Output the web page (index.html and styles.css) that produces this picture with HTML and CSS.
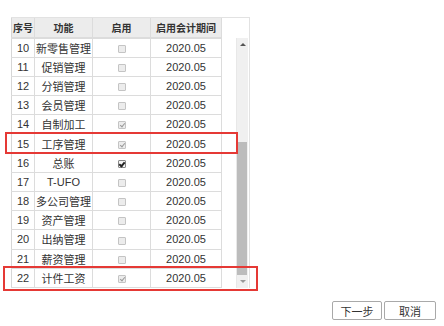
FILE: index.html
```html
<!DOCTYPE html>
<html lang="zh-CN">
<head>
    <meta charset="UTF-8">
    <title>启用模块</title>
    <link rel="stylesheet" href="styles.css">
</head>
<body>
    <div class="page">
        <div class="grid">
            <div class="grid_head">
                <table class="tbl">
                    <colgroup><col class="c1"><col class="c2"><col class="c3"><col class="c4"></colgroup>
                    <tr>
                        <th>序号</th>
                        <th>功能</th>
                        <th>启用</th>
                        <th>启用会计期间</th>
                    </tr>
                </table>
                <div class="head_fill"></div>
            </div>
            <div class="grid_body">
                <table class="tbl">
                    <colgroup><col class="c1"><col class="c2"><col class="c3"><col class="c4"></colgroup>
                    <tr><td>10</td><td>新零售管理</td><td><span class="cb"></span></td><td>2020.05</td></tr>
                    <tr><td>11</td><td>促销管理</td><td><span class="cb"></span></td><td>2020.05</td></tr>
                    <tr><td>12</td><td>分销管理</td><td><span class="cb"></span></td><td>2020.05</td></tr>
                    <tr><td>13</td><td>会员管理</td><td><span class="cb"></span></td><td>2020.05</td></tr>
                    <tr><td>14</td><td>自制加工</td><td><span class="cb dis_on"></span></td><td>2020.05</td></tr>
                    <tr><td>15</td><td>工序管理</td><td><span class="cb dis_on"></span></td><td>2020.05</td></tr>
                    <tr><td>16</td><td>总账</td><td><span class="cb on"></span></td><td>2020.05</td></tr>
                    <tr><td>17</td><td>T-UFO</td><td><span class="cb"></span></td><td>2020.05</td></tr>
                    <tr><td>18</td><td>多公司管理</td><td><span class="cb"></span></td><td>2020.05</td></tr>
                    <tr><td>19</td><td>资产管理</td><td><span class="cb"></span></td><td>2020.05</td></tr>
                    <tr><td>20</td><td>出纳管理</td><td><span class="cb"></span></td><td>2020.05</td></tr>
                    <tr><td>21</td><td>薪资管理</td><td><span class="cb"></span></td><td>2020.05</td></tr>
                    <tr><td>22</td><td>计件工资</td><td><span class="cb dis_on"></span></td><td>2020.05</td></tr>
                </table>
                <div class="body_gap"></div>
                <div class="scrollbar">
                    <div class="arrow up"></div>
                    <div class="track"><div class="thumb"></div></div>
                    <div class="arrow down"></div>
                </div>
            </div>
        </div>

        <div class="actions">
            <button class="btn">下一步</button>
            <button class="btn">取消</button>
        </div>

        <!-- red highlight marks -->
        <div class="mark mark_15"></div>
        <div class="mark mark_22"></div>
    </div>
</body>
</html>
```

FILE: styles.css
```css
* {
    margin: 0;
    padding: 0;
    box-sizing: border-box;
}

body {
    background: #fff;
    font-family: "Liberation Sans", "Noto Sans CJK SC", sans-serif;
    font-size: 11px;
    color: #333;
}

.page {
    position: relative;
    width: 444px;
    height: 326px;
    padding-top: 17px;
    overflow: hidden;
}

.grid {
    margin-left: 11px;
    width: 239px;
    border-top: 1px solid #e2e2e2;
    border-right: 1px solid #e2e2e2;
}

.grid_head,
.grid_body {
    display: flex;
}

.tbl {
    width: 210px;
    border-collapse: collapse;
    table-layout: fixed;
    flex: none;
}

.c1 { width: 23px; }
.c2 { width: 58px; }
.c3 { width: 58px; }
.c4 { width: 71px; }

.tbl th,
.tbl td {
    border: 1px solid #dcdcdc;
    text-align: center;
    white-space: nowrap;
    overflow: hidden;
}

.tbl th {
    height: 19px;
    background: #ececec;
    font-weight: bold;
    font-size: 10px;
    color: #333;
}

.tbl td {
    height: 19.2px;
    background: #fff;
}

.grid_head .tbl th:first-child,
.grid_body .tbl td:first-child {
    border-left: 1px solid #d6d6d6;
}

.grid_head .tbl tr th {
    border-top: none;
}

.head_fill {
    flex: 1;
}

.body_gap {
    width: 14px;
    flex: none;
}

.scrollbar {
    width: 12px;
    flex: none;
    display: flex;
    flex-direction: column;
    background: #f0f0f0;
    border-left: 1px solid #e8e8e8;
}

.arrow {
    height: 13px;
    position: relative;
}

.arrow::after {
    content: "";
    position: absolute;
    left: 3px;
    top: 5px;
    border-left: 3px solid transparent;
    border-right: 3px solid transparent;
}

.arrow.up::after {
    border-bottom: 3px solid #555;
}

.arrow.down::after {
    top: 5px;
    border-top: 3px solid #999;
}

.track {
    flex: 1;
    position: relative;
}

.thumb {
    position: absolute;
    left: 0;
    right: 1px;
    top: 91px;
    bottom: 0;
    background: #bcbcbc;
}

.cb {
    display: inline-block;
    width: 8px;
    height: 8px;
    border: 1px solid #c4c4c4;
    border-radius: 1px;
    background: #ececec;
    vertical-align: middle;
    position: relative;
}

.cb.dis_on::after,
.cb.on::after {
    content: "";
    position: absolute;
    left: 2px;
    top: 0;
    width: 2px;
    height: 4px;
    border-right: 1px solid #9a9a9a;
    border-bottom: 1px solid #9a9a9a;
    transform: rotate(40deg);
}

.cb.on {
    background: #f4f4f4;
    border-color: #888;
}

.cb.on::after {
    border-color: #222;
    border-right-width: 2px;
    border-bottom-width: 2px;
    left: 1px;
}

.actions {
    position: absolute;
    left: 332px;
    top: 301px;
    display: flex;
    gap: 2px;
}

.btn {
    height: 19px;
    background: #fff;
    border: 1px solid #a9a9a9;
    border-radius: 2px;
    font-family: "Liberation Sans", "Noto Sans CJK SC", sans-serif;
    font-size: 11px;
    color: #333;
}

.btn:first-child {
    width: 50px;
}

.btn:last-child {
    width: 52px;
}

.mark {
    position: absolute;
    border: 2px solid #e53935;
}

.mark_15 {
    left: 5px;
    top: 132px;
    width: 233px;
    height: 22px;
}

.mark_22 {
    left: 3px;
    top: 266px;
    width: 255px;
    height: 25px;
}
```
